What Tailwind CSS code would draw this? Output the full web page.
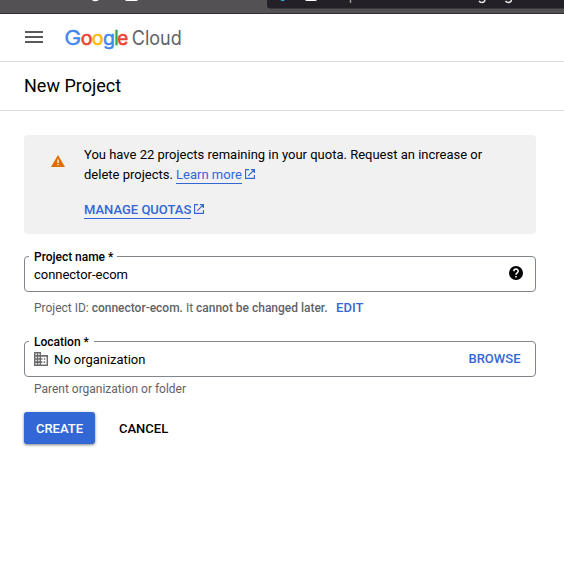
<!DOCTYPE html>
<html lang="en">
<head>
<meta charset="utf-8">
<title>New Project</title>
<script src="https://cdn.jsdelivr.net/npm/@tailwindcss/browser@4"></script>
</head>
<body class="h-[577px] overflow-hidden bg-white font-[Roboto,sans-serif] text-[13px] text-black">
<div class="relative h-[14px] overflow-hidden border-b border-[#303033] bg-[#535153]">
  <svg class="block" width="564" height="13" viewBox="0 0 564 13">
    <path d="M267 0H564V8.5H270Q267 8.5 267 5Z" fill="#232127"/>
    <path d="M92 0H99Q97 1.2 95 1.2Q93 1.2 92 0Z" fill="#fff"/>
    <path d="M125 0H138Q137.500 1 136 1H127Q125.500 1 125 0Z" fill="#fff"/>
    <path d="M280 0H285L283 1.200Z" fill="#35b8ea"/>
    <path d="M305 0H317Q316.500 1 315 1H307Q305.500 1 305 0Z" fill="#fff"/>
    <path d="M350.500 0V3" stroke="#999" stroke-width="1.500"/>
    <path d="M479 1Q480 2.500 482 2.500Q484.500 2.500 485 0M505.500 1Q506.500 2.500 508.500 2.500Q511 2.500 511.500 0" fill="none" stroke="#e8e8e8" stroke-width="1.400"/>
  </svg>
</div>
<header class="flex h-12 items-center border-b border-[#dadce0] pl-[25px]">
  <svg class="-mt-[2px] block" width="18" height="12" viewBox="0 0 18 12" fill="#5a5a5a"><path d="M0 0h18v2H0zM0 5h18v2H0zM0 10h18v2H0z"/></svg>
  <svg class="ml-[21px] block" width="124" height="30" viewBox="0 -2 124 30" font-family="Inter, sans-serif" font-size="19.500">
    <text x=".2" y="19.800" fill="#4285f4" stroke="#4285f4" stroke-width=".3" font-size="20.500" textLength="17" lengthAdjust="spacingAndGlyphs">G</text>
    <text x="16.700" y="19.800" fill="#ea4335" stroke="#ea4335" stroke-width=".6">o</text>
    <text x="27.800" y="19.800" fill="#fbbc04" stroke="#fbbc04" stroke-width=".6">o</text>
    <text x="38.900" y="19.800" fill="#4285f4" stroke="#4285f4" stroke-width=".5">g</text>
    <text x="49.900" y="19.800" fill="#34a853" stroke="#34a853" stroke-width=".5">l</text>
    <text x="53.300" y="19.800" fill="#ea4335" stroke="#ea4335" stroke-width=".6" textLength="11" lengthAdjust="spacingAndGlyphs">e</text>
    <text x="67.800" y="19.800" fill="#5f6368" textLength="50" lengthAdjust="spacingAndGlyphs">Cloud</text>
  </svg>
</header>
<div class="flex h-[49px] items-center border-b border-[#dadce0] px-6">
  <h1 class="text-[18px] leading-6">New Project</h1>
</div>
<main class="pl-6 pr-7 pt-6">
  <section class="flex h-[99px] rounded bg-[#f1f1f1] pl-[27px] pt-[10px]">
    <svg class="mt-[10px] block" width="14" height="12" viewBox="0 0 14 12"><path d="M7 0L14 12H0Z" fill="#e06c00"/><path d="M6.400 4.500h1.300v3.500H6.400zM6.400 9h1.300v1.300H6.400z" fill="#fff"/></svg>
    <div class="ml-[19px] leading-5">
      <p class="whitespace-nowrap">You have 22 projects remaining in your quota. Request an increase or</p>
      <p class="flex items-start"><span>delete projects.&nbsp;</span><a class="h-[19px] border-b border-[#3367d6] text-[#3367d6]">Learn more</a>
        <svg class="ml-[3px] mt-[3.500px] block" width="10" height="10" viewBox="0 0 11 11" fill="none" stroke="#3367d6" stroke-width="1.300"><path d="M4.500 .6H.6V10.400H10.400V6.500M6.500 .6H10.400V4.500M10.400 .6L3.500 7.500"/></svg></p>
      <p class="mt-[15px] flex items-start font-medium text-[#3367d6]"><a class="h-[19px] border-b border-[#3367d6]">MANAGE QUOTAS</a>
        <svg class="ml-[3px] mt-[3.500px] block" width="10" height="10" viewBox="0 0 11 11" fill="none" stroke="#3367d6" stroke-width="1.300"><path d="M4.500 .6H.6V10.400H10.400V6.500M6.500 .6H10.400V4.500M10.400 .6L3.500 7.500"/></svg></p>
    </div>
  </section>
  <div class="relative mt-[22px] flex h-9 items-center justify-between rounded border border-[#80868b] pl-[9px] pr-3">
    <label class="absolute -top-[7px] left-1 bg-white pl-[5px] pr-1 text-[12px] leading-[14px] font-medium tracking-[-.02px]">Project name *</label>
    <span class="pt-[2px] tracking-[-.03px]">connector-ecom</span>
    <svg class="-mt-[2px] block" width="14" height="14" viewBox="0 0 14 14"><circle cx="7" cy="7" r="7" fill="#000"/><path d="M4.800 5.300C4.800 2.300 9.200 2.300 9.200 5.200C9.200 6.800 7 6.900 7 8.700M7 9.900v1.600" fill="none" stroke="#fff" stroke-width="1.500"/></svg>
  </div>
  <p class="mt-2 flex h-4 pl-[10px] text-[12px] leading-4 text-[#5f6368]"><span class="whitespace-pre tracking-[-.01px]">Project ID: <b class="font-medium">connector-ecom.</b> It <b class="font-medium">cannot be changed later.</b></span><a class="ml-[8.500px] text-[13px] font-medium text-[#3367d6]">EDIT</a></p>
  <div class="relative mt-[25px] flex h-9 items-center rounded border border-[#80868b] pl-[9px] pr-[14.500px]">
    <label class="absolute -top-[7px] left-1 bg-white px-[5px] text-[12px] leading-[14px] font-medium">Location *</label>
    <svg class="block" width="14" height="14" viewBox="2 3 20 18" preserveAspectRatio="none" fill="#6b6b6b"><path d="M12 7V3H2v18h20V7H12zM6 19H4v-2h2v2zm0-4H4v-2h2v2zm0-4H4V9h2v2zm0-4H4V5h2v2zm4 12H8v-2h2v2zm0-4H8v-2h2v2zm0-4H8V9h2v2zm0-4H8V5h2v2zm10 12h-8v-2h2v-2h-2v-2h2v-2h-2V9h8v10zm-2-8h-2v2h2v-2zm0 4h-2v2h2v-2z"/></svg>
    <span class="ml-[6px] pt-[2px] tracking-[-.03px]">No organization</span>
    <a class="ml-auto font-medium text-[#3367d6]">BROWSE</a>
  </div>
  <p class="mt-1 pl-[10px] text-[12px] leading-4 tracking-[-.01px] text-[#5f6368]">Parent organization or folder</p>
  <div class="mt-[15px] flex items-center font-medium">
    <button class="h-8 w-[71px] rounded-[3px] bg-[#3367d6] pt-[2px] text-white shadow-[0_1px_3px_rgba(0,0,0,.5)]">CREATE</button>
    <button class="ml-6 pt-[2px]">CANCEL</button>
  </div>
</main>
</body>
</html>
